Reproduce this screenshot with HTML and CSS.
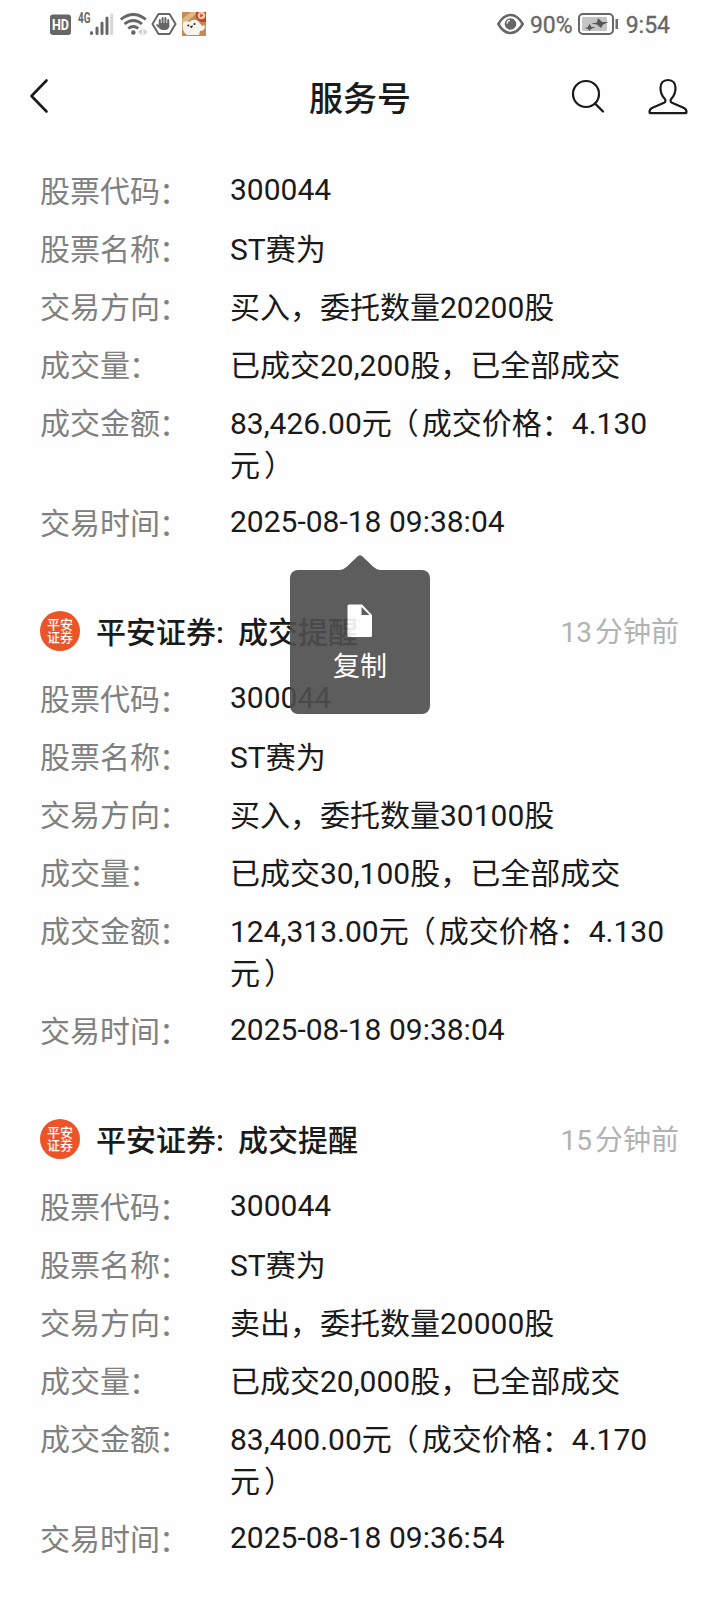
FILE: index.html
```
<!DOCTYPE html>
<html lang="zh-CN">
<head>
    <meta charset="UTF-8">
    <meta name="viewport" content="width=device-width, initial-scale=1.0">
    <title>服务号</title>
    <link rel="stylesheet" href="styles.css">
</head>
<body>

    <!-- Barra de estado -->
    <div class="status">
        <svg class="status-left" width="160" height="32" viewBox="48 8 160 32">
            <rect x="50" y="14.500" width="21" height="20.500" rx="3" fill="#666"/>
            <text x="60.500" y="29.800" class="hd" text-anchor="middle" textLength="17" lengthAdjust="spacingAndGlyphs">HD</text>
            <text x="78" y="22.800" class="net" textLength="12.500" lengthAdjust="spacingAndGlyphs">4G</text>
            <g stroke="#666" stroke-width="3" stroke-linecap="round">
                <path d="M91.500 32.500v1M97 28v5.500M102 23v10.500M107 18v15.500"/>
                <path d="M111.700 15v18.500" stroke="#d5d5d5"/>
            </g>
            <g fill="none" stroke="#666" stroke-width="2.800">
                <path d="M120.800 19.500Q133.300 9.500 145.800 19.500"/>
                <path d="M124.500 24Q133.300 17 142 24"/>
                <path d="M128.300 28.500Q133.300 24.500 138.300 28.500"/>
            </g>
            <circle cx="133.300" cy="32.500" r="2.300" fill="#666"/>
            <path d="M138 32l4-3.500v7zM147.500 32l-4-3.500v7z" fill="#d0d0d0"/>
            <path d="M158.500 14h11l6 10-6 10h-11l-6-10z" fill="none" stroke="#666" stroke-width="2" stroke-linejoin="round"/>
            <path d="M159.800 20v6M162.600 18v8M165.400 18v8M168.200 20v7" stroke="#666" stroke-width="2" stroke-linecap="round"/>
            <path d="M158.800 23h10.400v3q-1 4-3.500 4h-3q-2.500 0-6.700-5l1-1 1.800 1z" fill="#666"/>
            <rect x="182" y="12" width="24" height="24" fill="#c48c50"/>
            <path d="M182 19l9-7h7l-11 10h-5z" fill="#dcb887"/>
            <path d="M196 12h10v10h-5q-7-3-5-10z" fill="#c44030"/>
            <circle cx="201.500" cy="15.500" r="3.800" fill="#f3c9a0"/>
            <path d="M200.300 13.500l3 2-3 2z" fill="#c44030"/>
            <path d="M183 22l4-1 2 1q5-4 9-1l4 5q3-2 3 1-1 4-5 4l-1 4h-12q-6-4-4-13z" fill="#f8f3ec"/>
            <circle cx="188.300" cy="25.500" r="1" fill="#222"/>
            <circle cx="194.500" cy="24" r="1" fill="#222"/>
            <path d="M190 26l3-.5-1 2.500q-1.500.5-2-2z" fill="#333"/>
        </svg>
        <div class="status-right">
            <svg width="27" height="22" viewBox="0 0 27 22">
                <path d="M1.300 11Q6.500 2 13.500 2t12.200 9q-5.200 9-12.200 9T1.300 11z" fill="none" stroke="#666" stroke-width="2.500"/>
                <circle cx="13.500" cy="11" r="5.800" fill="#666"/>
                <path d="M10 10.500q.3-3 3-3.200" fill="none" stroke="#fff" stroke-width="1.300"/>
            </svg>
            <span class="percent">90%</span>
            <svg class="battery" width="41" height="22" viewBox="0 0 41 22">
                <rect x="1" y="1" width="34" height="20" rx="4" fill="none" stroke="#666" stroke-width="2"/>
                <rect x="4" y="4" width="25" height="14" rx="1" fill="#c5c5c5"/>
                <path d="M38.700 6v10" stroke="#666" stroke-width="2.400"/>
                <path d="M13 10.500l6-1L20 5l4 4h6.500L25 11.500 23 15l-4-3.500zM6.500 15l3-.5 2-3.500 2 3h4L13 16l-1.500 2-1.500-2z" fill="#555"/>
            </svg>
            <span class="clock">9:54</span>
        </div>
    </div>

    <!-- Encabezado -->
    <div class="header">
        <svg class="back" width="24" height="40" viewBox="0 0 24 40">
            <path d="M18.500 4.500L3.500 20l15 15.500" fill="none" stroke="#1a1a1a" stroke-width="2.600" stroke-linecap="round" stroke-linejoin="round"/>
        </svg>
        <h1>服务号</h1>
        <div class="actions">
            <svg width="36" height="38" viewBox="570 78 36 38">
                <circle cx="586" cy="94" r="13" fill="none" stroke="#1a1a1a" stroke-width="2.200"/>
                <path d="M595 103.500l8 8" stroke="#1a1a1a" stroke-width="2.400" stroke-linecap="round"/>
            </svg>
            <svg width="42" height="40" viewBox="647 76 42 40">
                <path d="M668 79c-5 0-7.500 3.500-7.500 8 0 5 2 8.500 4 10.500 1.500 1.500 1.200 3.500-.5 4.300l-12 5.200c-2 1-2.500 2.300-2.500 4v.3q0 .9.900.9h35.200q.9 0 .9-.9v-.3c0-1.700-.5-3-2.500-4l-12-5.200c-1.700-.8-2-2.800-.5-4.300 2-2 4-5.500 4-10.500 0-4.500-2.500-8-7.500-8z" fill="none" stroke="#1a1a1a" stroke-width="2.200" stroke-linejoin="round"/>
            </svg>
        </div>
    </div>

    <div class="messages">
        <div class="message">
            <div class="row num"><span class="label">股票代码<span class="colon">：</span></span><span class="value">300044</span></div>
            <div class="row"><span class="label">股票名称<span class="colon">：</span></span><span class="value">ST赛为</span></div>
            <div class="row"><span class="label">交易方向<span class="colon">：</span></span><span class="value">买入，委托数量20200股</span></div>
            <div class="row"><span class="label">成交量<span class="colon">：</span></span><span class="value">已成交20,200股，已全部成交</span></div>
            <div class="row"><span class="label">成交金额<span class="colon">：</span></span><span class="value">83,426.00元<span class="open">（</span>成交价格<span class="colon">：</span>4.130<br>元<span class="close">）</span></span></div>
            <div class="row num"><span class="label">交易时间<span class="colon">：</span></span><span class="value">2025-08-18 09:38:04</span></div>
        </div>

        <div class="message">
            <div class="sender">
                <div class="avatar"><span>平安</span><span>证券</span></div>
                <h2><span class="name">平安证券:</span>成交提醒</h2>
                <span class="time">13 分钟前</span>
            </div>
            <div class="row num"><span class="label">股票代码<span class="colon">：</span></span><span class="value">300044</span></div>
            <div class="row"><span class="label">股票名称<span class="colon">：</span></span><span class="value">ST赛为</span></div>
            <div class="row"><span class="label">交易方向<span class="colon">：</span></span><span class="value">买入，委托数量30100股</span></div>
            <div class="row"><span class="label">成交量<span class="colon">：</span></span><span class="value">已成交30,100股，已全部成交</span></div>
            <div class="row"><span class="label">成交金额<span class="colon">：</span></span><span class="value">124,313.00元<span class="open">（</span>成交价格<span class="colon">：</span>4.130<br>元<span class="close">）</span></span></div>
            <div class="row num"><span class="label">交易时间<span class="colon">：</span></span><span class="value">2025-08-18 09:38:04</span></div>

            <!-- Menú para copiar -->
            <div class="menu">
                <svg class="arrow" width="40" height="15" viewBox="0 0 40 15">
                    <path d="M0 15q4-.5 7-3.500L17.500 1.500q2.500-2.500 5 0L33 11.500q3 3 7 3.500z" fill="#4e4e4e"/>
                </svg>
                <svg width="26" height="34" viewBox="0 0 26 34">
                    <path d="M2 .5h13L25 11v20.500q0 1.500-1.500 1.500H2Q.5 33 .5 31.500V2Q.5.5 2 .5zM14.500 3v8h8z" fill="#fff" fill-rule="evenodd"/>
                </svg>
                <span>复制</span>
            </div>
        </div>

        <div class="message">
            <div class="sender">
                <div class="avatar"><span>平安</span><span>证券</span></div>
                <h2><span class="name">平安证券:</span>成交提醒</h2>
                <span class="time">15 分钟前</span>
            </div>
            <div class="row num"><span class="label">股票代码<span class="colon">：</span></span><span class="value">300044</span></div>
            <div class="row"><span class="label">股票名称<span class="colon">：</span></span><span class="value">ST赛为</span></div>
            <div class="row"><span class="label">交易方向<span class="colon">：</span></span><span class="value">卖出，委托数量20000股</span></div>
            <div class="row"><span class="label">成交量<span class="colon">：</span></span><span class="value">已成交20,000股，已全部成交</span></div>
            <div class="row"><span class="label">成交金额<span class="colon">：</span></span><span class="value">83,400.00元<span class="open">（</span>成交价格<span class="colon">：</span>4.170<br>元<span class="close">）</span></span></div>
            <div class="row num"><span class="label">交易时间<span class="colon">：</span></span><span class="value">2025-08-18 09:36:54</span></div>
        </div>
    </div>

</body>
</html>
```
FILE: styles.css
```
* {
    box-sizing: border-box;
}

body {
    margin: 0;
    height: 1600px;
    overflow: hidden;
    background-color: #fefefe;
    color: #1a1a1a;
    font-family: Roboto, "Noto Sans CJK SC", sans-serif;
}

h1, h2 {
    margin: 0;
    font-weight: 500;
}

svg {
    display: block;
    flex: none;
}

.status {
    display: flex;
    justify-content: space-between;
    align-items: center;
    height: 48px;
    padding: 0 50px 0 48px;
    color: #666;
}

.hd {
    font-size: 14px;
    font-weight: 700;
    fill: #fff;
}

.net {
    font-size: 14px;
    font-weight: 700;
    fill: #666;
}

.status-right {
    display: flex;
    align-items: center;
    font-size: 23px;
    line-height: 30px;
    -webkit-text-stroke: 0.3px #666;
}

.percent {
    margin: 3px 5px 0 6px;
}

.battery {
    margin-right: 7px;
}

.clock {
    margin-top: 3px;
}

.header {
    display: grid;
    grid-template-columns: 1fr auto 1fr;
    align-items: center;
    height: 98px;
    padding: 0 31px 0 28px;
}

.back {
    margin-top: -2px;
}

h1 {
    font-size: 34px;
    line-height: 50px;
    padding: 4px 0 0 3px;
}

.actions {
    display: flex;
    justify-content: flex-end;
    align-items: center;
    gap: 41px;
}

.messages {
    padding: 25px 41px 0 40px;
}

.message {
    position: relative;
    margin-bottom: 66px;
}

.row {
    display: flex;
    font-size: 30px;
    line-height: 42px;
    margin-bottom: 16px;
}

.label {
    width: 190px;
    flex: none;
    color: #808080;
}

.value {
    white-space: nowrap;
}

.num .value {
    margin-top: -2px;
}

.colon {
    line-height: 0;
    vertical-align: -1px;
}

.label .colon {
    margin-left: -1px;
}

.open {
    margin: 0 3px 0 -3px;
}

.close {
    margin-left: 4px;
}

.sender {
    display: flex;
    align-items: center;
    height: 40px;
    margin-bottom: 28px;
}

.avatar {
    display: flex;
    flex-direction: column;
    justify-content: center;
    align-items: center;
    width: 40px;
    height: 40px;
    margin-right: 16px;
    border-radius: 50%;
    background-color: #ec5428;
    color: #fff;
    font-size: 13px;
    font-weight: 500;
    line-height: 13px;
}

h2 {
    font-size: 30px;
    line-height: 40px;
    padding-top: 3px;
}

.name {
    display: inline-block;
    width: 142px;
}

.time {
    margin: -3px 0 0 auto;
    font-size: 28px;
    word-spacing: -4px;
    color: #b2b2b2;
}

.menu {
    position: absolute;
    left: 250px;
    top: -41px;
    width: 140px;
    height: 144px;
    display: flex;
    flex-direction: column;
    align-items: center;
    padding-top: 34px;
    border-radius: 8px;
    background-color: #4e4e4e;
    color: #fff;
    opacity: 0.91;
    font-size: 27px;
    line-height: 40px;
}

.menu span {
    margin-top: 9px;
}

.arrow {
    position: absolute;
    left: 50px;
    top: -15px;
}
```
